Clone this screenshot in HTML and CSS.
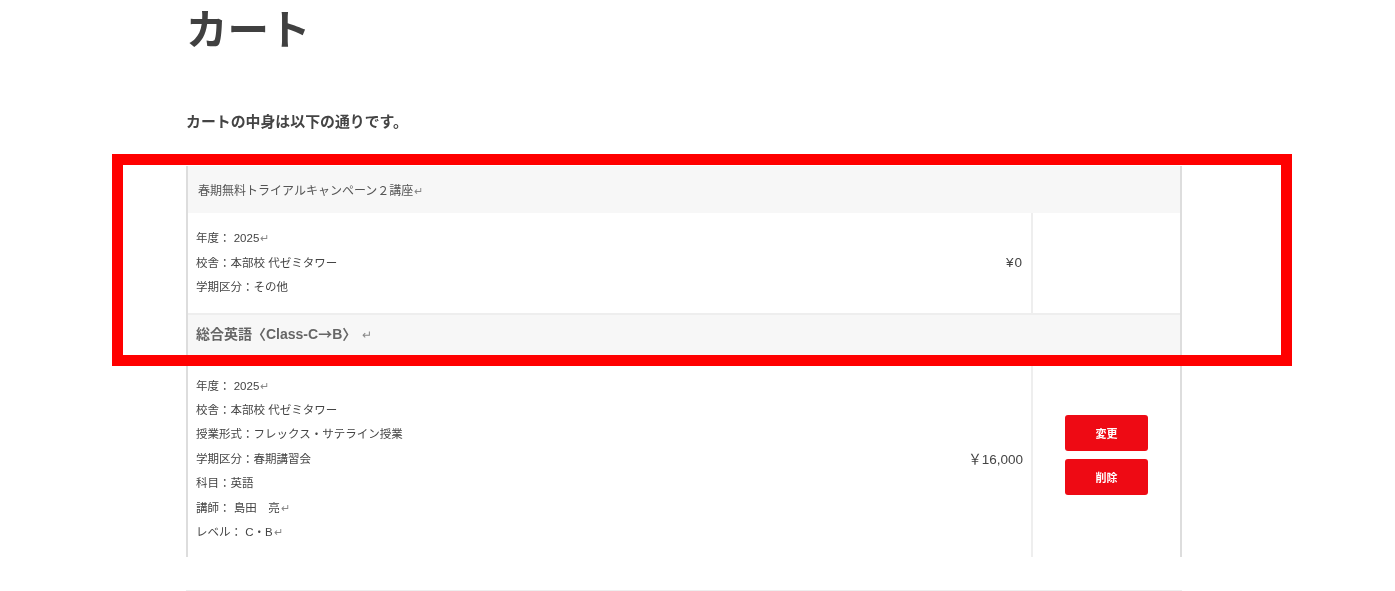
FILE: index.html
```html
<html lang="ja">
<head>
    <meta charset="UTF-8">
    <title>カート</title>
    <link rel="stylesheet" href="styles.css">
</head>
<body>
    <div class="container">
        <h1>カート</h1>
        <p class="lead">カートの中身は以下の通りです。</p>

        <table class="cart">
            <colgroup>
                <col>
                <col class="col-price">
                <col class="col-actions">
            </colgroup>
            <tr>
                <th colspan="3" class="course">春期無料トライアルキャンペーン２講座<span class="ret">↵</span></th>
            </tr>
            <tr class="item-short">
                <td class="info">
                    <p>年度： 2025<span class="ret">↵</span></p>
                    <p>校舎：本部校 代ゼミタワー</p>
                    <p>学期区分：その他</p>
                </td>
                <td class="price price-free">¥0</td>
                <td class="actions"></td>
            </tr>
            <tr>
                <th colspan="3" class="course course-bold">総合英語〈Class-C<span class="arrow">→</span>B〉<span class="ret">↵</span></th>
            </tr>
            <tr class="item-tall">
                <td class="info">
                    <p>年度： 2025<span class="ret">↵</span></p>
                    <p>校舎：本部校 代ゼミタワー</p>
                    <p>授業形式：フレックス・サテライン授業</p>
                    <p>学期区分：春期講習会</p>
                    <p>科目：英語</p>
                    <p>講師： 島田　亮<span class="ret">↵</span></p>
                    <p>レベル： C・B<span class="ret">↵</span></p>
                </td>
                <td class="price">￥16,000</td>
                <td class="actions">
                    <button>変更</button>
                    <button>削除</button>
                </td>
            </tr>
        </table>

        <hr class="rule">
    </div>

    <div class="highlight"></div>
</body>
</html>
```

FILE: styles.css
```css
* {
    margin: 0;
    padding: 0;
    box-sizing: border-box;
    font-family: "Liberation Sans", "Noto Sans CJK JP", sans-serif;
}
body {
    background: #fff;
    color: #444;
    height: 591px;
    overflow: hidden;
}
.container {
    width: 996px;
    margin-left: 186px;
    filter: blur(0.4px);
}
h1 {
    font-size: 41.5px;
    font-weight: 700;
    line-height: 62px;
    color: #404040;
}
.lead {
    font-size: 14.9px;
    font-weight: 700;
    line-height: 22px;
    margin-top: 49px;
    color: #444;
}
.cart {
    width: 996px;
    margin-top: 33px;
    border-collapse: separate;
    border-spacing: 0;
    table-layout: fixed;
    border-left: 2px solid #ddd;
    border-right: 2px solid #ddd;
}
.col-price {
    width: 150px;
}
.col-actions {
    width: 147px;
}
.course {
    height: 47px;
    background: #f7f7f7;
    font-size: 12px;
    font-weight: 400;
    text-align: left;
    padding-left: 10px;
    color: #555;
}
.course-bold {
    height: 48px;
    font-size: 14px;
    font-weight: 700;
    padding-left: 8px;
    padding-bottom: 10px;
    color: #666;
    border-top: 2px solid #eee;
}
.arrow {
    font-family: "Noto Sans CJK JP", sans-serif;
}
.ret {
    color: #888;
    font-weight: 400;
    font-size: 11px;
    margin-left: 1px;
}
.course-bold .ret {
    margin-left: 6px;
    font-size: 12px;
}
.item-short {
    height: 100px;
}
.item-tall {
    height: 196px;
}
.info {
    padding-left: 8px;
    font-size: 11.5px;
    color: #444;
}
.info p {
    line-height: 24.4px;
}
.price {
    padding-right: 8px;
    padding-bottom: 2px;
    text-align: right;
    font-size: 13.5px;
    color: #444;
    border-right: 2px solid #eee;
}
.price-free {
    letter-spacing: 1px;
}
.actions {
    padding-bottom: 8px;
    text-align: center;
}
.actions button {
    display: block;
    width: 83px;
    height: 36px;
    margin: 8px auto;
    background: #ee0a14;
    border: none;
    border-radius: 3px;
    color: #fff;
    font-size: 11px;
    font-weight: 700;
}
.rule {
    border: none;
    border-top: 1px solid #eee;
    margin-top: 33px;
}
/* red frame drawn over the table */
.highlight {
    position: absolute;
    left: 112px;
    top: 154px;
    width: 1180px;
    height: 212px;
    border: 11px solid #f00;
}
```
